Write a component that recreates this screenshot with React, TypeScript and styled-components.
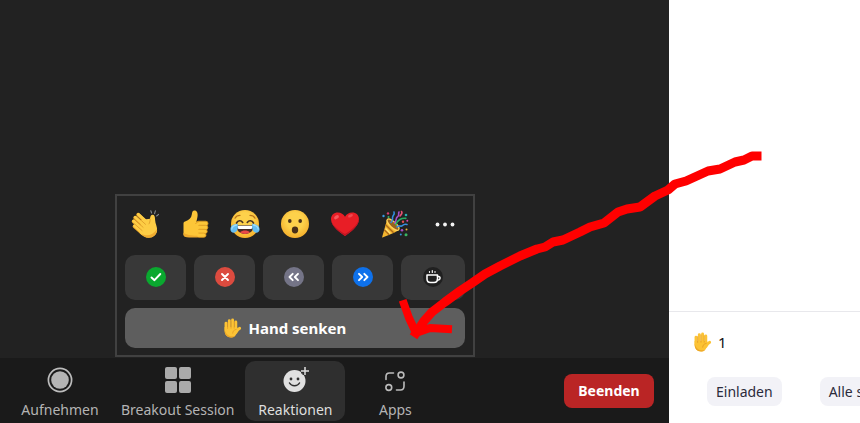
import React from "react";
import styled, { createGlobalStyle, css } from "styled-components";

const GlobalStyle = createGlobalStyle`
  *, *::before, *::after { box-sizing: border-box; }
  body { margin: 0; background: #222222; font-family: "Noto Sans", "Open Sans", sans-serif; }
  button { font: inherit; border: 0; padding: 0; margin: 0; cursor: pointer; }
`;

const Page = styled.div`
  position: relative;
  display: flex;
  min-height: 100vh;
  overflow: hidden;
`;

const Meeting = styled.main`
  flex: 1;
  min-width: 0;
  display: flex;
  flex-direction: column;
  background: #222222;
`;

const Stage = styled.section`
  flex: 1;
`;

const Toolbar = styled.nav`
  display: flex;
  align-items: center;
  height: 65px;
  padding: 0 15px 0 10px;
  background: #1a1a1a;
`;

const ToolSlot = styled.div`
  position: relative;
`;

const ToolButton = styled.button<{ $active?: boolean }>`
  display: flex;
  flex-direction: column;
  align-items: center;
  gap: 7px;
  min-width: 100px;
  height: 60px;
  padding: 6px 11px 0;
  border-radius: 10px;
  background: ${(p) => (p.$active ? "#2f2f2f" : "transparent")};
  color: ${(p) => (p.$active ? "#dedede" : "#b4b4b4")};
  font-size: 14px;
  line-height: 20px;
  white-space: nowrap;
  svg { display: block; }
`;

const EndButton = styled.button`
  width: 90px;
  height: 34px;
  margin-left: auto;
  border-radius: 8px;
  background: #ba2525;
  color: #ffffff;
  font-size: 14px;
  font-weight: 700;
`;

const Popup = styled.div`
  position: absolute;
  bottom: calc(100% + 4px);
  left: 50%;
  transform: translateX(-50%);
  width: 360px;
  padding: 3px 3px 7px;
  border: 2px solid #414141;
  background: #222222;
`;

const EmojiRow = styled.div`
  display: grid;
  grid-template-columns: repeat(7, 1fr);
  height: 50px;
  margin-bottom: 6px;
`;

const EmojiButton = styled.button`
  display: flex;
  align-items: center;
  justify-content: center;
  background: transparent;
`;

const FeedbackRow = styled.div`
  display: grid;
  grid-template-columns: repeat(4, 61fr) 64fr;
  gap: 8px;
  margin: 0 5px 8px;
`;

const rounded = css`
  border-radius: 10px;
`;

const FeedbackButton = styled.button`
  ${rounded}
  display: flex;
  align-items: center;
  justify-content: center;
  height: 45px;
  background: #383838;
`;

const HandBar = styled.div`
  display: flex;
  margin: 0 5px;
`;

const HandButton = styled.button`
  ${rounded}
  flex: 1;
  display: flex;
  align-items: center;
  justify-content: center;
  gap: 6px;
  height: 40px;
  padding-right: 22px;
  background: #5e5e5e;
  color: #ffffff;
  font-size: 15px;
  font-weight: 700;
`;

const Sidebar = styled.aside`
  flex: 0 0 191px;
  display: flex;
  flex-direction: column;
  min-width: 0;
  overflow: hidden;
  background: #ffffff;
  color: #232333;
`;

const Participants = styled.div`
  flex: 1;
`;

const HandCount = styled.div`
  display: flex;
  align-items: center;
  gap: 6px;
  height: 60px;
  padding-left: 23px;
  border-top: 1px solid #e8e8ec;
  color: #111111;
  font-size: 15px;
`;

const SidebarActions = styled.div`
  display: flex;
  gap: 38px;
  height: 52px;
  padding: 6px 0 0 38px;
`;

const SideButton = styled.button`
  flex: none;
  height: 29px;
  padding: 0 9px;
  border-radius: 8px;
  background: #f2f2f7;
  color: #2b2b3b;
  font-size: 14px;
  white-space: nowrap;
`;

const Annotation = styled.svg`
  position: absolute;
  left: 398px;
  bottom: 83px;
  pointer-events: none;
`;

const Hand = ({ size = 20 }: { size?: number }) => (
  <svg width={size} height={size} viewBox="0 0 20 20" aria-hidden="true">
    <g stroke="#fcc335" strokeWidth="2.9" strokeLinecap="round" fill="none">
      <path d="M4 5.2v7M7.3 2.6v8M10.6 2v8M13.8 4v8" />
      <path d="M17.6 10.3c-1.5.6-2.6 2.2-3.6 4" strokeWidth="3" />
    </g>
    <path d="M2.6 9h12.6v4.6c-.8 3.8-2.8 5.9-6 5.9-4.4 0-6.6-3-6.6-7z" fill="#fcc335" />
    <path d="M5.6 4.6v5.8M9 3v7.2M12.2 3.6v6.6M14.2 11.4c-2.4.4-3.4 1.8-3.5 3.8" fill="none" stroke="#df9520" strokeWidth=".65" strokeLinecap="round" />
    <path d="M2.6 12c0 4.5 2.2 7.5 6.6 7.5 1.6 0 2.8-.5 3.8-1.5-5.3 1.2-8.4-.7-10.4-6z" fill="#eca727" />
  </svg>
);

const Clap = () => (
  <svg width="28" height="28" viewBox="0 0 28 28" aria-hidden="true">
    <g stroke="#e8a32a" strokeWidth="3.5" strokeLinecap="round">
      <path d="M7 4.6 15 12M4 7.6l9 8.4M2.5 11.4l9 8M3.4 16.4l8 7" />
    </g>
    <path d="m10 10 9-1.2c.3-2.4 1-4 2.6-4 2 0 2.4 2 2.5 5.2.1 3.6 2.4 7 2 10.8-.5 4-4 7-8.3 7-3.6 0-6.2-1.8-9-4.5z" fill="#fdcd45" />
    <g stroke="#fdcd45" strokeWidth="2.9" strokeLinecap="round">
      <path d="m7.4 4.4 9.2 8.4M4.4 7.2l10 9.2M2.6 11l10 9M3.6 15.8l8 7.4" />
    </g>
    <path d="m5.8 6.4 9 8.2M3.4 9.4l9 8.2M3.4 13.8l8 7M19.2 9c-.2 2.3-.5 4-1.4 5.2" stroke="#d99224" strokeWidth=".7" fill="none" />
    <path d="M26 19c0 5-3.4 8.8-8.2 8.8-3.4 0-6-1.8-8.8-4.5 7 4 12.8 2 17-4.3z" fill="#efab30" />
    <path d="m20.6 3-.8-2.2M23.6 3.6l.8-2.8M25.6 6l2-1.6" stroke="#858b91" strokeWidth="1.1" strokeLinecap="round" />
  </svg>
);

const ThumbsUp = () => (
  <svg width="28" height="28" viewBox="0 0 28 28" aria-hidden="true">
    <path d="M2.5 13.5c0-1 .5-1.7 1.6-2 4-1.3 6.2-3.5 6.7-7C11 2 11.7.4 13.5.4c2.400 0 3.400 2.500 3.100 5.400-.2 2-.8 3.800-1.200 6.200H20l2 15H7.500c-3 0-5-.8-5-2.500z" fill="#fdc638" />
    <g fill="#fdc638" stroke="#dd9820" strokeWidth=".8">
      <rect x="15" y="11.2" width="12" height="4.6" rx="2.3" />
      <rect x="16" y="15.3" width="10.8" height="4.4" rx="2.2" />
      <rect x="16" y="19.3" width="10.2" height="4.2" rx="2.1" />
      <rect x="15.5" y="23.1" width="9.5" height="4.2" rx="2.1" />
    </g>
    <path d="M13 12h4.5v14.8H13z" fill="#fdc638" />
    <path d="M2.5 22.8c3 2 7 3 14 3v1.6H8c-3.500 0-5.500-1-5.500-2.700z" fill="#efab2d" />
    <path d="M14.5 13.8c.8-1.2 1.8-1.8 3-1.9" stroke="#dd9820" strokeWidth=".9" fill="none" />
  </svg>
);

const FaceGradient = ({ id }: { id: string }) => (
  <defs>
    <radialGradient id={id} cx=".5" cy=".4" r=".6">
      <stop offset=".5" stopColor="#fdd14b" />
      <stop offset="1" stopColor="#f4ae2b" />
    </radialGradient>
  </defs>
);

const Joy = () => (
  <svg width="30" height="28" viewBox="0 0 30 28" aria-hidden="true">
    <FaceGradient id="joy-face" />
    <circle cx="15" cy="14" r="14" fill="url(#joy-face)" />
    <path d="M5 8.2C6 6.4 7.7 5.4 10 5.4M25 8.2c-1-1.8-2.7-2.8-5-2.8" stroke="#b9741c" strokeWidth="1.2" fill="none" strokeLinecap="round" />
    <path d="M6.5 13c1.4-2.7 4.5-3.1 6.2-.6M23.5 13c-1.4-2.7-4.5-3.1-6.2-.6" stroke="#493222" strokeWidth="1.7" fill="none" strokeLinecap="round" />
    <path d="M6.5 15.3h17c.2 5.4-3.3 8.7-8.5 8.7s-8.7-3.3-8.5-8.7z" fill="#442a25" />
    <path d="M7.3 15.8h15.4c0 2-.6 3.2-1.7 3.2H9c-1.1 0-1.7-1.2-1.7-3.2z" fill="#ffffff" />
    <path d="M10 22.3c2.5-2.4 7.5-2.4 10 0-2.5 2.1-7.5 2.1-10 0z" fill="#e84848" />
    <path d="M7.8 13.8C3.2 14 .5 16 .4 19.3c0 2.6 2.6 4.3 5 3 2.4-1.3 2.7-4.8 2.4-8.5zM22.2 13.8c4.6.2 7.3 2.2 7.4 5.5 0 2.6-2.6 4.3-5 3-2.4-1.3-2.7-4.8-2.4-8.5z" fill="#63bdf2" />
    <path d="M6.5 15c-3 .6-4.5 2-4.7 4M23.5 15c3 .6 4.5 2 4.7 4" stroke="#a1dcfa" strokeWidth="1.3" fill="none" strokeLinecap="round" />
  </svg>
);

const Surprised = () => (
  <svg width="28" height="28" viewBox="0 0 28 28" aria-hidden="true">
    <FaceGradient id="surprised-face" />
    <circle cx="14" cy="14" r="14" fill="url(#surprised-face)" />
    <ellipse cx="8.8" cy="11" rx="1.8" ry="2.1" fill="#493019" />
    <ellipse cx="19.2" cy="11" rx="1.8" ry="2.1" fill="#493019" />
    <ellipse cx="14" cy="20" rx="3.2" ry="3.4" fill="#493019" />
  </svg>
);

const Heart = () => (
  <svg width="30" height="28" viewBox="0 0 30 28" aria-hidden="true">
    <path d="M15 26C12 23.6 1 17 1 9.2 1 5 4 2.4 7.8 2.4c3.2 0 5.9 1.6 7.2 4.4 1.3-2.8 4-4.4 7.2-4.4C26 2.4 29 5 29 9.2 29 17 18 23.6 15 26z" fill="#e81e26" />
    <path d="M28.6 7c1 6-5.6 12.2-13.6 17C9 20.6 3.4 16.2 1.3 11.5 3 18.4 12.3 23.8 15 26 18 23.6 29 17 29 9.2c0-.8-.1-1.5-.4-2.2z" fill="#bd1523" />
    <ellipse cx="6.5" cy="7.2" rx="2.7" ry="1.7" fill="#f5595e" transform="rotate(-35 6.5 7.2)" />
    <ellipse cx="20.5" cy="5.8" rx="2.6" ry="1.3" fill="#f04a50" transform="rotate(-25 20.5 5.8)" />
  </svg>
);

const Party = () => (
  <svg width="28" height="28" viewBox="0 0 28 28" aria-hidden="true">
    <path d="M1 27.5 6.2 9.3c1-1.7 12 8.3 11.3 10.7C17 21.5 1.5 27.7 1 27.5z" fill="#f3b52e" />
    <path d="m3.2 19.8 5 5M4.6 14.8l8 8" stroke="#ad6b1c" strokeWidth="1.5" />
    <path d="m4.6 18.5 4.8 5" stroke="#ffe27a" strokeWidth="1.3" />
    <ellipse cx="12" cy="14.6" rx="2.9" ry="7.7" transform="rotate(-47 12 14.6)" fill="#98631d" stroke="#ffd35a" strokeWidth="1.2" />
    <g fill="none" strokeWidth="1.6" strokeLinecap="round">
      <path d="M10 12.5C13 11 10.5 8 12 6s1.8-2.5 1-4" stroke="#328ddd" />
      <path d="M13.5 13c2.6-2.3.8-5.2 3-6.3s.5-3 1.5-4.7" stroke="#a650c9" />
      <path d="M14.8 14.6c1.4-4.7 6.2-6.7 10-6.2" stroke="#29ad63" />
      <path d="M16 17c2-2.5 3.7.3 5.5-1.5s2.8-1.6 4.5-1" stroke="#378fe0" />
      <path d="M20.5 1.5c1.5 2-.6 3-1.5 4.5" stroke="#e45273" />
    </g>
    <g>
      <circle cx="2.5" cy="6" r="1.2" fill="#389be4" />
      <circle cx="7" cy="3.4" r="1.2" fill="#d83f73" />
      <circle cx="7.5" cy="7" r="1" fill="#34b66b" />
      <circle cx="25" cy="5" r="1.3" fill="#28aeb2" />
      <circle cx="22" cy="11.8" r="1.2" fill="#e24b53" />
      <circle cx="26.3" cy="10.7" r="1" fill="#d546af" />
      <circle cx="21" cy="20.3" r="1.3" fill="#a84bc6" />
      <circle cx="25.5" cy="19.5" r="1" fill="#efb733" />
      <circle cx="25" cy="24.8" r="1.5" fill="#39b762" />
      <circle cx="19.8" cy="24.5" r="1" fill="#3396dd" />
    </g>
  </svg>
);

const More = () => (
  <svg width="20" height="20" viewBox="0 0 20 20" fill="#f3f3f3" aria-hidden="true">
    <circle cx="2.5" cy="10.5" r="1.9" />
    <circle cx="10" cy="10.5" r="1.9" />
    <circle cx="17.5" cy="10.5" r="1.9" />
  </svg>
);

const Badge = ({ color, d }: { color: string; d: string }) => (
  <svg width="20" height="20" viewBox="0 0 20 20" aria-hidden="true">
    <circle cx="10" cy="10" r="10" fill={color} />
    <path d={d} fill="none" stroke="#ffffff" strokeWidth="1.9" strokeLinecap="round" strokeLinejoin="round" />
  </svg>
);

const Coffee = () => (
  <svg width="20" height="20" viewBox="0 0 20 20" aria-hidden="true">
    <circle cx="10" cy="10" r="10" fill="#202020" />
    <g fill="none" stroke="#ffffff" strokeWidth="1.5" strokeLinecap="round" strokeLinejoin="round">
      <path d="M4 8h10.5v4c0 2-1.3 3.5-3.5 3.5H7.5C5.3 15.5 4 14 4 12z" />
      <path d="M14.5 9.5h1c2.2 0 2 3.5-.2 3.5h-1" />
      <path d="M6.5 4.5v.8M9.300 3.500v2M12 4.500v.8" strokeWidth="1.2" />
    </g>
  </svg>
);

const Record = () => (
  <svg width="30" height="26" viewBox="0 0 30 26" aria-hidden="true">
    <circle cx="15" cy="13" r="11.6" fill="none" stroke="#bcbcbc" strokeWidth="1.7" />
    <circle cx="15" cy="13" r="8.8" fill="#b4b4b4" />
  </svg>
);

const Rooms = () => (
  <svg width="30" height="26" viewBox="0 0 30 26" fill="#aaaaaa" aria-hidden="true">
    <rect x="2" y="0" width="12" height="12" rx="2" />
    <rect x="16" y="0" width="12" height="12" rx="2" />
    <rect x="2" y="14" width="12" height="12" rx="2" />
    <rect x="16" y="14" width="12" height="12" rx="2" />
  </svg>
);

const Reactions = () => (
  <svg width="30" height="26" viewBox="0 0 30 26" aria-hidden="true">
    <circle cx="14.5" cy="14" r="11" fill="#e0e0e0" />
    <circle cx="11" cy="12" r="1.4" fill="#2f2f2f" />
    <circle cx="18" cy="12" r="1.4" fill="#2f2f2f" />
    <path d="M9.5 16c2 3.6 8 3.6 10 0" stroke="#2f2f2f" strokeWidth="1.5" fill="none" strokeLinecap="round" />
    <path d="M25 0v8M21 4h8" stroke="#2f2f2f" strokeWidth="5" />
    <path d="M25 0v8M21 4h8" stroke="#e0e0e0" strokeWidth="1.5" />
  </svg>
);

const Apps = () => (
  <svg width="30" height="26" viewBox="0 0 30 26" fill="none" stroke="#bcbcbc" strokeWidth="1.6" strokeLinecap="round" aria-hidden="true">
    <path d="M6 12.5V9.500c0-2 1.200-3.500 3.500-3.500h4M24 15v4c0 2.700-1.200 4-3.500 4h-4" />
    <circle cx="21" cy="8" r="2.9" />
    <circle cx="8.8" cy="20.5" r="2.9" />
  </svg>
);

const emojis = [
  { label: "Klatschen", icon: <Clap /> },
  { label: "Daumen hoch", icon: <ThumbsUp /> },
  { label: "Freude", icon: <Joy /> },
  { label: "Überrascht", icon: <Surprised /> },
  { label: "Herz", icon: <Heart /> },
  { label: "Tada", icon: <Party /> },
  { label: "Mehr", icon: <More /> },
];

const feedback = [
  { label: "Ja", icon: <Badge color="#0aa82f" d="m5.500 10.500 3 2.700L14.300 7" /> },
  { label: "Nein", icon: <Badge color="#dc4b3f" d="m7 7 6 6m0-6-6 6" /> },
  { label: "Langsamer", icon: <Badge color="#747487" d="M8.700 6.800 5.500 10l3.200 3.200M14 6.800 10.800 10l3.200 3.200" /> },
  { label: "Schneller", icon: <Badge color="#0e71eb" d="M6 6.800 9.200 10 6 13.200M11.300 6.800l3.200 3.200-3.200 3.200" /> },
  { label: "Pause", icon: <Coffee /> },
];

const ReactionPopup = () => (
  <Popup role="group" aria-label="Reaktionen">
    <EmojiRow>
      {emojis.map((e) => (
        <EmojiButton key={e.label} type="button" aria-label={e.label}>{e.icon}</EmojiButton>
      ))}
    </EmojiRow>
    <FeedbackRow>
      {feedback.map((f) => (
        <FeedbackButton key={f.label} type="button" aria-label={f.label}>{f.icon}</FeedbackButton>
      ))}
    </FeedbackRow>
    <HandBar>
      <HandButton type="button"><Hand />Hand senken</HandButton>
    </HandBar>
  </Popup>
);

export default function App() {
  return (
    <Page>
      <GlobalStyle />
      <Meeting>
        <Stage />
        <Toolbar>
          <ToolButton type="button"><Record />Aufnehmen</ToolButton>
          <ToolButton type="button"><Rooms />Breakout Session</ToolButton>
          <ToolSlot>
            <ToolButton type="button" $active aria-expanded="true"><Reactions />Reaktionen</ToolButton>
            <ReactionPopup />
          </ToolSlot>
          <ToolButton type="button"><Apps />Apps</ToolButton>
          <EndButton type="button">Beenden</EndButton>
        </Toolbar>
      </Meeting>
      <Sidebar>
        <Participants />
        <HandCount><Hand />1</HandCount>
        <SidebarActions>
          <SideButton type="button">Einladen</SideButton>
          <SideButton type="button">Alle stummschalten</SideButton>
        </SidebarActions>
      </Sidebar>
      <Annotation width="368" height="190" viewBox="398 150 368 190" fill="none" stroke="#ff0000" strokeWidth="8" strokeLinecap="square" strokeLinejoin="bevel" aria-hidden="true">
        <path d="M757 156 752 156 744 160 735 162 720 169 708 171 686 181 675 184 668 190 655 196 640 207 627 209 618 212 604 223 590 227 580 232 563 240 553 242 545 247 537 249 520 256 500 266 485 274 472 283 460 291 445 302 432 312 424 321 416 333" strokeWidth="9" />
        <path d="M404 304 409 318 416 333 430 328 448 329" />
      </Annotation>
    </Page>
  );
}
